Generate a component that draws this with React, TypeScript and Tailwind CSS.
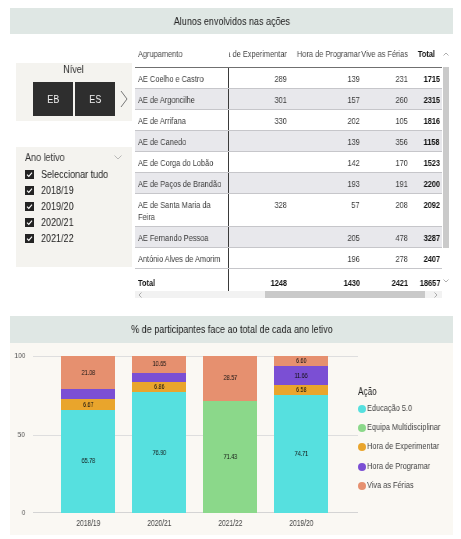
import React from "react";

type Row = { name: React.ReactNode; key: string; e: string; p: string; v: string; t: string };

function T({
  children,
  o = "l",
  s = "82",
}: {
  children: React.ReactNode;
  o?: "l" | "r" | "c";
  s?: "82" | "78" | "72";
}) {
  const cls = o === "r" ? "origin-right" : o === "c" ? "origin-center" : "origin-left";
  const sc = s === "78" ? "scale-x-[0.78]" : s === "72" ? "scale-x-[0.72]" : "scale-x-[0.82]";
  return <span className={`inline-block whitespace-nowrap will-change-transform ${sc} ${cls}`}>{children}</span>;
}

function TT({ children, o = "l" }: { children: React.ReactNode; o?: "l" | "r" | "c" }) {
  return (
    <T o={o} s="78">
      {children}
    </T>
  );
}

const rows: Row[] = [
  { key: "a", name: "AE Coelho e Castro", e: "289", p: "139", v: "231", t: "1715" },
  { key: "b", name: "AE de Argoncilhe", e: "301", p: "157", v: "260", t: "2315" },
  { key: "c", name: "AE de Arrifana", e: "330", p: "202", v: "105", t: "1816" },
  { key: "d", name: "AE de Canedo", e: "", p: "139", v: "356", t: "1158" },
  { key: "e", name: "AE de Corga do Lobão", e: "", p: "142", v: "170", t: "1523" },
  { key: "f", name: "AE de Paços de Brandão", e: "", p: "193", v: "191", t: "2200" },
  {
    key: "g",
    name: (
      <>
        <div>
          <TT>AE de Santa Maria da</TT>
        </div>
        <div>
          <TT>Feira</TT>
        </div>
      </>
    ),
    e: "328",
    p: "57",
    v: "208",
    t: "2092",
  },
  { key: "h", name: "AE Fernando Pessoa", e: "", p: "205", v: "478", t: "3287" },
  { key: "i", name: "António Alves de Amorim", e: "", p: "196", v: "278", t: "2407" },
];

const C = {
  edu: "#56e0df",
  equipa: "#8bd88a",
  exp: "#e9a52c",
  prog: "#7b4fd4",
  ferias: "#e6906f",
};

type Seg = { v: number; c: string; label?: string };
const bars: { year: string; segs: Seg[] }[] = [
  {
    year: "2018/19",
    segs: [
      { v: 65.78, c: C.edu, label: "65.78" },
      { v: 6.67, c: C.exp, label: "6.67" },
      { v: 6.47, c: C.prog },
      { v: 21.08, c: C.ferias, label: "21.08" },
    ],
  },
  {
    year: "2020/21",
    segs: [
      { v: 76.9, c: C.edu, label: "76.90" },
      { v: 6.86, c: C.exp, label: "6.86" },
      { v: 5.59, c: C.prog },
      { v: 10.65, c: C.ferias, label: "10.65" },
    ],
  },
  {
    year: "2021/22",
    segs: [
      { v: 71.43, c: C.equipa, label: "71.43" },
      { v: 28.57, c: C.ferias, label: "28.57" },
    ],
  },
  {
    year: "2019/20",
    segs: [
      { v: 74.71, c: C.edu, label: "74.71" },
      { v: 6.58, c: C.exp, label: "6.58" },
      { v: 11.66, c: C.prog, label: "11.66" },
      { v: 6.6, c: C.ferias, label: "6.60" },
    ],
  },
];

const legend = [
  { n: "Educação 5.0", c: C.edu },
  { n: "Equipa Multidisciplinar", c: C.equipa },
  { n: "Hora de Experimentar", c: C.exp },
  { n: "Hora de Programar", c: C.prog },
  { n: "Viva as Férias", c: C.ferias },
];

const PLOT_H = 157;

function Check() {
  return (
    <div className="w-[9px] h-[9px] bg-[#232323] flex items-center justify-center shrink-0">
      <svg width="7" height="7" viewBox="0 0 7 7">
        <polyline points="1,3.6 2.8,5.4 6,1.6" fill="none" stroke="#ffffff" strokeWidth="1.1" />
      </svg>
    </div>
  );
}

export default function App() {
  return (
    <div className="w-[461px] h-[539px] bg-white pl-[10px] pr-[8px] pt-[8px] overflow-hidden font-['Liberation_Sans',Arial,sans-serif] text-[#444]">
      {/* Header 1 */}
      <div className="h-[26px] bg-[#dfe7e4] flex items-center justify-center text-[11px] text-[#222]">
        <T o="c">Alunos envolvidos nas ações</T>
      </div>

      {/* Top section */}
      <div className="h-[282px] flex">
        {/* slicers */}
        <div className="w-[125px] shrink-0 pl-[6px] pt-[29px]">
          <div className="w-[116px] h-[58px] bg-[#f4f3ef]">
            <div className="text-center text-[11px] leading-[12px] text-[#333]">
              <T o="c">Nível</T>
            </div>
            <div className="flex items-center mt-[7px] pl-[17px]">
              <div className="w-[40px] h-[34px] bg-[#2e2e2e] flex items-center justify-center text-[#f5f5f5] text-[11px]">
                <T o="c">EB</T>
              </div>
              <div className="w-[40px] h-[34px] ml-[2px] bg-[#2e2e2e] flex items-center justify-center text-[#f5f5f5] text-[11px]">
                <T o="c">ES</T>
              </div>
              <svg className="ml-[5px]" width="8" height="18" viewBox="0 0 8 18">
                <polyline points="1,1 7,9 1,17" fill="none" stroke="#777" strokeWidth="1" />
              </svg>
            </div>
          </div>
          <div className="w-[116px] h-[120px] bg-[#f4f3ef] mt-[26px] pt-[4px] pl-[9px]">
            <div className="flex items-center justify-between pr-[10px] leading-[12px] text-[11px] text-[#333]">
              <T>Ano letivo</T>
              <svg width="8" height="5" viewBox="0 0 8 5">
                <polyline points="0.5,0.5 4,4 7.5,0.5" fill="none" stroke="#aaa" strokeWidth="0.8" />
              </svg>
            </div>
            <div className="mt-[3px]">
              {["Seleccionar tudo", "2018/19", "2019/20", "2020/21", "2021/22"].map((l) => (
                <div key={l} className="h-[16px] flex items-center text-[11px] text-[#222]">
                  <Check />
                  <span className="ml-[7px]">
                    <T>{l}</T>
                  </span>
                </div>
              ))}
            </div>
          </div>
        </div>

        {/* table */}
        <div className="w-[314px] pt-[8px] flex">
          <div className="w-[307px] text-[9.5px] text-[#3a3a3a]">
            <div className="h-[26px] flex items-center border-b border-[#707070] text-[#444]">
              <div className="w-[94px] pl-[3px]">
                <TT>Agrupamento</TT>
              </div>
              <div className="w-[63px] overflow-hidden flex justify-end pr-[5px]">
                <span className="shrink-0">
                  <TT o="r">Hora de Experimentar</TT>
                </span>
              </div>
              <div className="w-[73px] flex justify-end pr-[5px]">
                <TT o="r">Hora de Programar</TT>
              </div>
              <div className="w-[48px] flex justify-end pr-[5px]">
                <TT o="r">Vive as Férias</TT>
              </div>
              <div className="w-[29px] flex justify-end pr-[7px] font-bold text-[#111]">
                <TT o="r">Total</TT>
              </div>
            </div>
            {rows.map((r, i) => (
              <div
                key={r.key}
                className={`flex border-b border-[#c6c6ca] ${i % 2 ? "bg-[#e8e8ec]" : "bg-white"}`}
              >
                <div className="w-[94px] shrink-0 border-r border-[#3a3a3a] pl-[3px] pr-[4px] pt-[5px] pb-[3px] leading-[12px] text-[#3a3a3a]">
                  {typeof r.name === "string" ? <TT>{r.name}</TT> : r.name}
                </div>
                <div className="w-[63px] text-right pr-[5px] pt-[5px] leading-[12px]">
                  <TT o="r">{r.e}</TT>
                </div>
                <div className="w-[73px] text-right pr-[5px] pt-[5px] leading-[12px]">
                  <TT o="r">{r.p}</TT>
                </div>
                <div className="w-[48px] text-right pr-[5px] pt-[5px] leading-[12px]">
                  <TT o="r">{r.v}</TT>
                </div>
                <div className="w-[29px] text-right pr-[2px] pt-[5px] leading-[12px] font-bold text-[#111]">
                  <TT o="r">{r.t}</TT>
                </div>
              </div>
            ))}
            <div className="flex h-[22px] font-bold text-[#111] leading-[12px]">
              <div className="w-[94px] border-r border-[#3a3a3a] pl-[3px] pt-[8px]">
                <TT>Total</TT>
              </div>
              <div className="w-[63px] text-right pr-[5px] pt-[8px]">
                <TT o="r">1248</TT>
              </div>
              <div className="w-[73px] text-right pr-[5px] pt-[8px]">
                <TT o="r">1430</TT>
              </div>
              <div className="w-[48px] text-right pr-[5px] pt-[8px]">
                <TT o="r">2421</TT>
              </div>
              <div className="w-[29px] text-right pr-[2px] pt-[8px]">
                <TT o="r">18657</TT>
              </div>
            </div>
            {/* horizontal scrollbar */}
            <div className="h-[7px] bg-[#f2f2f2] flex items-center">
              <svg className="ml-[3px]" width="4" height="6" viewBox="0 0 4 6">
                <polyline points="3.5,0.5 1,3 3.5,5.5" fill="none" stroke="#999" strokeWidth="0.8" />
              </svg>
              <div className="ml-[123px] w-[160px] h-[7px] bg-[#c9c9c9]" />
              <svg className="ml-[9px]" width="4" height="6" viewBox="0 0 4 6">
                <polyline points="0.5,0.5 3,3 0.5,5.5" fill="none" stroke="#999" strokeWidth="0.8" />
              </svg>
            </div>
          </div>
          {/* vertical scrollbar */}
          <div className="w-[7px] ml-[1px] flex flex-col items-center">
            <svg className="mt-[10px]" width="6" height="4" viewBox="0 0 6 4">
              <polyline points="0.5,3.5 3,1 5.5,3.5" fill="none" stroke="#999" strokeWidth="0.8" />
            </svg>
            <div className="w-[6px] h-[181px] mt-[11px] bg-[#cacaca]" />
            <svg className="mt-[31px]" width="6" height="4" viewBox="0 0 6 4">
              <polyline points="0.5,0.5 3,3 5.5,0.5" fill="none" stroke="#999" strokeWidth="0.8" />
            </svg>
          </div>
        </div>
      </div>

      {/* Header 2 */}
      <div className="h-[27px] bg-[#dfe7e4] flex items-center justify-center text-[11px] text-[#222]">
        <T o="c">% de participantes face ao total de cada ano letivo</T>
      </div>

      {/* Chart */}
      <div className="h-[192px] bg-[#faf8f3] flex">
        <div className="w-[23px] shrink-0 pt-[13px]">
          <div className="relative h-[157px] text-[8px] text-[#555] leading-[10px]">
            <span className="absolute right-[8px] top-0 -translate-y-1/2">
              <T o="r">100</T>
            </span>
            <span className="absolute right-[8px] top-1/2 -translate-y-1/2">
              <T o="r">50</T>
            </span>
            <span className="absolute right-[8px] bottom-0 translate-y-1/2">
              <T o="r">0</T>
            </span>
          </div>
        </div>
        <div className="w-[325px] shrink-0 pt-[13px]">
          <div className="relative h-[157px]">
            <div className="absolute left-0 right-0 top-0 h-px bg-[#dedede]" />
            <div className="absolute left-0 right-0 top-1/2 h-px bg-[#dedede]" />
            <div className="absolute left-0 right-0 bottom-0 h-px bg-[#d4d4d4]" />
            <div className="relative flex items-end h-full pl-[28px] gap-[17px]">
              {bars.map((b) => {
                const tot = b.segs.reduce((a, s) => a + s.v, 0);
                return (
                  <div key={b.year} className="w-[54px] h-full flex flex-col-reverse">
                    {b.segs.map((s, i) => (
                      <div
                        key={i}
                        className="w-full flex items-center justify-center text-[7.5px] leading-[8px] text-[#111]"
                        style={{ height: `${(s.v / tot) * PLOT_H}px`, backgroundColor: s.c }}
                      >
                        {s.label ? (
                          <T o="c" s="72">
                            {s.label}
                          </T>
                        ) : null}
                      </div>
                    ))}
                  </div>
                );
              })}
            </div>
          </div>
          <div className="flex pl-[28px] gap-[17px] mt-[5px] text-[8.5px] leading-[10px] text-[#444]">
            {bars.map((b) => (
              <div key={b.year} className="w-[54px] text-center">
                <T o="c" s="78">
                  {b.year}
                </T>
              </div>
            ))}
          </div>
        </div>
        <div className="pt-[43px]">
          <div className="text-[10px] leading-[12px] text-[#222]">
            <T>Ação</T>
          </div>
          <div className="mt-[1px]">
            {legend.map((l) => (
              <div key={l.n} className="h-[19.3px] flex items-center text-[9px] text-[#444]">
                <div className="w-[8px] h-[8px] rounded-full shrink-0" style={{ backgroundColor: l.c }} />
                <span className="ml-[1px]">
                  <T>{l.n}</T>
                </span>
              </div>
            ))}
          </div>
        </div>
      </div>
    </div>
  );
}
